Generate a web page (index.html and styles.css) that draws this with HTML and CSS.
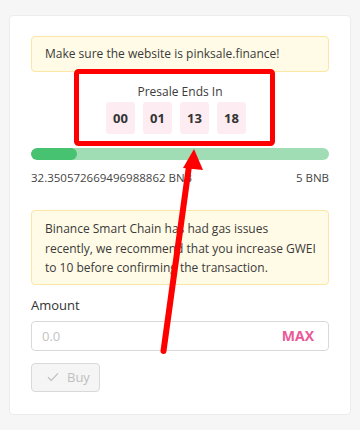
FILE: index.html
```html
<!DOCTYPE html>
<html lang="en">
<head>
<meta charset="utf-8">
<title>Presale</title>
<link rel="stylesheet" href="styles.css">
</head>
<body>
<div class="card">
  <div class="alert alert-top">Make sure the website is pinksale.finance!</div>
  <div class="countdown">
    <div class="countdown-title">Presale Ends In</div>
    <div class="countdown-boxes">
      <span class="cd-box">00</span>
      <span class="cd-box">01</span>
      <span class="cd-box">13</span>
      <span class="cd-box">18</span>
    </div>
  </div>
  <div class="progress"><div class="progress-fill" style="width:15.4%"></div></div>
  <div class="progress-labels">
    <span>32.350572669496988862 BNB</span>
    <span>5 BNB</span>
  </div>
  <div class="alert alert-gas">Binance Smart Chain has had gas issues<br>recently, we recommend that you increase GWEI<br>to 10 before confirming the transaction.</div>
  <div class="amount-label">Amount</div>
  <div class="amount-input">
    <span class="placeholder">0.0</span>
    <span class="max">MAX</span>
  </div>
  <button class="buy-btn" disabled>
    <svg class="check" width="12" height="10" viewBox="0 0 12 10"><path d="M1 5.2 L4.3 8.4 L11 1.4" fill="none" stroke="#bfbfbf" stroke-width="1.3"/></svg>
    <span>Buy</span>
  </button>
</div>
<svg class="annotation" width="360" height="430" viewBox="0 0 360 430">
  <rect x="76.5" y="71.5" width="196" height="72" rx="2" fill="none" stroke="#ff0000" stroke-width="5"/>
  <line x1="189" y1="166" x2="163.5" y2="351" stroke="#ff0000" stroke-width="6" stroke-linecap="round"/>
  <polygon points="194,149 183,168 203,170" fill="#ff0000"/>
</svg>
</body>
</html>
```
FILE: styles.css
```css
* { box-sizing: border-box; }
html, body { margin: 0; padding: 0; }
body {
  background: #f6f6f6;
  font-family: "Open Sans", "Noto Sans", sans-serif;
  color: #333;
  width: 360px;
  height: 430px;
  position: relative;
  overflow: hidden;
}
.card {
  margin: 15px 0 0 9px;
  width: 342px;
  background: #fff;
  border: 1px solid #ececec;
  border-radius: 4px;
  padding: 20px 21px 22px;
}
.alert {
  background: #fffbe6;
  border: 1px solid #fbe6a6;
  border-radius: 4px;
  font-size: 12px;
  color: #3a3a3a;
}
.alert-top {
  padding: 7px 13px;
  line-height: 20px;
}
.countdown {
  margin-top: 10px;
  text-align: center;
}
.countdown-title {
  font-size: 12px;
  line-height: 20px;
  color: #3a3a3a;
}
.countdown-boxes {
  display: flex;
  justify-content: center;
}
.cd-box {
  width: 29px;
  height: 32px;
  margin-right: 8px;
  background: #fdedf2;
  border-radius: 3px;
  font-weight: 700;
  font-size: 13px;
  line-height: 32px;
  color: #333;
  text-align: center;
}
.progress {
  margin-top: 14px;
  height: 12px;
  border-radius: 6px;
  background: #a0ddb5;
  overflow: hidden;
}
.progress-fill {
  height: 100%;
  background: #47c271;
  border-radius: 6px;
}
.progress-labels {
  display: flex;
  justify-content: space-between;
  margin-top: 10px;
  font-size: 11.5px;
  line-height: 16px;
  color: #444;
}
.alert-gas {
  margin-top: 24px;
  padding: 8px 6px 6px 13px;
  line-height: 19.5px;
  white-space: nowrap;
}
.amount-label {
  margin-top: 10px;
  font-size: 13px;
  line-height: 20px;
  color: #333;
}
.amount-input {
  margin-top: 6px;
  height: 30px;
  border: 1px solid #d9d9d9;
  border-radius: 4px;
  display: flex;
  align-items: center;
  justify-content: space-between;
  padding: 0 14px 0 10px;
}
.placeholder {
  font-size: 13px;
  color: #c4c4c4;
}
.max {
  font-size: 14px;
  font-weight: 700;
  color: #ea5a97;
}
.buy-btn {
  margin-top: 12px;
  height: 29px;
  width: 69px;
  display: flex;
  align-items: center;
  gap: 8px;
  padding: 0 0 0 15px;
  background: #f5f5f5;
  border: 1px solid #d9d9d9;
  border-radius: 4px;
  font-family: "Open Sans", "Noto Sans", sans-serif;
  font-size: 13px;
  color: #bfbfbf;
}
.check { display: block; }
.annotation {
  position: absolute;
  left: 0;
  top: 0;
  pointer-events: none;
}
```
